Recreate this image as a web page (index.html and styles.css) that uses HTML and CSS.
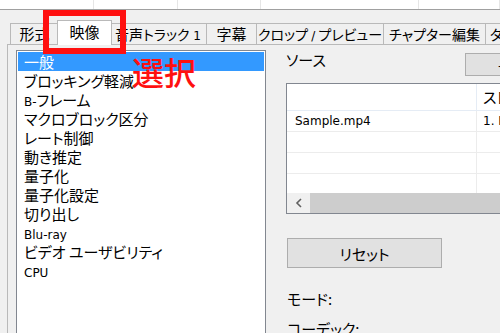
FILE: index.html
```html
<!DOCTYPE html>
<html lang="ja">
<head>
    <meta charset="UTF-8">
    <meta name="viewport" content="width=device-width, initial-scale=1.0">
    <title>映像設定</title>
    <link rel="stylesheet" href="styles.css">
</head>
<body>
    <div class="strip">
        <span class="cell c1"></span>
        <span class="cell c2"></span>
        <span class="cell c3"></span>
        <span class="cell c4"></span>
        <span class="cell"></span>
    </div>

    <div class="tabctl">
        <div class="tabs">
            <div class="tab t-format">形式</div>
            <div class="tab t-video selected">映像</div>
            <div class="tab t-audio">音声トラック<span class="lat"> 1</span></div>
            <div class="tab t-sub">字幕</div>
            <div class="tab t-crop">クロップ <span class="lat">/</span> プレビュー</div>
            <div class="tab t-chapter">チャプター編集</div>
            <div class="tab t-more">タグ</div>
        </div>

        <div class="panel">
            <ul class="listbox">
                <li class="active">一般</li>
                <li>ブロッキング軽減</li>
                <li><span class="lat">B-</span>フレーム</li>
                <li>マクロブロック区分</li>
                <li>レート制御</li>
                <li>動き推定</li>
                <li>量子化</li>
                <li>量子化設定</li>
                <li>切り出し</li>
                <li><span class="lat">Blu-ray</span></li>
                <li>ビデオ ユーザビリティ</li>
                <li><span class="lat">CPU</span></li>
            </ul>

            <div class="side">
                <div class="source-row">
                    <span class="source-label">ソース</span>
                    <button class="btn small">-</button>
                </div>

                <div class="listview">
                    <div class="lv-head">
                        <div class="lv-col first"></div>
                        <div class="lv-col">ストリーム</div>
                    </div>
                    <div class="lv-body">
                        <div class="lv-row">
                            <div class="lv-col first lat-cell">Sample.mp4</div>
                            <div class="lv-col lat-cell">1. H264</div>
                        </div>
                        <div class="lv-row"><div class="lv-col first"></div><div class="lv-col"></div></div>
                        <div class="lv-row"><div class="lv-col first"></div><div class="lv-col"></div></div>
                        <div class="lv-row"><div class="lv-col first"></div><div class="lv-col"></div></div>
                    </div>
                    <div class="hscroll">
                        <div class="arrow">
                            <svg width="8" height="10" viewBox="0 0 8 10">
                                <polyline points="6,1 2,5 6,9" fill="none" stroke="#606060" stroke-width="1.6"/>
                            </svg>
                        </div>
                        <div class="thumb"></div>
                    </div>
                </div>

                <button class="btn reset">リセット</button>

                <div class="field">モード:</div>
                <div class="field next">コーデック:</div>
            </div>
        </div>
    </div>

    <!-- annotation overlay -->
    <div class="mark"></div>
    <div class="mark-label">選択</div>
</body>
</html>
```

FILE: styles.css
```css
body {
    margin: 0;
    width: 500px;
    height: 333px;
    overflow: hidden;
    background-color: #f0f0f0;
    font-family: "Noto Sans CJK JP", sans-serif;
    font-size: 15px;
    font-feature-settings: "palt";
    color: #000;
    position: relative;
}

.lat {
    font-family: "DejaVu Sans", sans-serif;
    font-size: 12px;
}

/* white strip of the window above */
.strip {
    display: flex;
    height: 9px;
    background-color: #fff;
    border-bottom: 1px solid #a0a0a0;
}

.cell {
    flex: 1;
    border-right: 1px solid #e6e6e6;
}

.cell.c1 { flex: none; width: 93px; }
.cell.c2 { flex: none; width: 83px; }
.cell.c3 { flex: none; width: 82px; }
.cell.c4 { flex: none; width: 157px; }

.tabctl {
    margin-left: 7px;
    margin-top: 10px;
}

.tabs {
    display: flex;
    align-items: flex-end;
    height: 24px;
    padding-left: 3px;
}

.tab {
    flex: none;
    box-sizing: border-box;
    height: 21px;
    line-height: 20px;
    font-size: 14px;
    text-align: center;
    white-space: nowrap;
    overflow: hidden;
    background-color: #f0f0f0;
    border: 1px solid #b9b9b9;
    border-bottom: none;
    border-left: none;
}

.tab:first-child {
    border-left: 1px solid #b9b9b9;
}

.tab.selected {
    height: 25px;
    padding-top: 1px;
    margin: 0 -2px -1px -2px;
    border-left: 1px solid #b9b9b9;
    background-color: #fff;
    font-size: 15px;
    position: relative;
    z-index: 1;
}

.t-format { width: 49px; font-size: 15px; }
.t-video { width: 55px; }
.t-audio { width: 97px; }
.t-sub { width: 50px; font-size: 15px; }
.t-crop { width: 127px; }
.t-chapter { width: 102px; }
.t-more { width: 74px; text-align: left; padding-left: 4px; }

.t-audio .lat,
.t-crop .lat {
    font-size: 12px;
}

.panel {
    display: flex;
    align-items: flex-start;
    height: 300px;
    border-top: 1px solid #b9b9b9;
    border-left: 1px solid #b9b9b9;
}

.listbox {
    flex: none;
    list-style: none;
    box-sizing: border-box;
    width: 250px;
    height: 290px;
    margin: 5px 0 0 8px;
    padding: 1px;
    background-color: #fff;
    border: 1px solid #828790;
}

.listbox li {
    height: 19px;
    line-height: 19px;
    padding-left: 6px;
    white-space: nowrap;
}

.listbox li.active {
    background-color: #3399ff;
    color: #fff;
}

.side {
    flex: none;
    width: 300px;
    margin: 8px 0 0 20px;
}

.source-row {
    display: flex;
    align-items: flex-start;
    height: 23px;
}

.source-label {
    flex: none;
    width: 179px;
    line-height: 16px;
    margin-top: -1px;
}

.btn {
    font-family: "Noto Sans CJK JP", sans-serif;
    font-size: 15px;
    font-feature-settings: "palt";
    box-sizing: border-box;
    background-color: #e1e1e1;
    border: 1px solid #adadad;
    border-radius: 0;
    padding: 0;
    color: #000;
}

.btn.small {
    flex: none;
    width: 100px;
    height: 23px;
    text-align: left;
    padding-left: 32px;
    line-height: 20px;
}

.listview {
    box-sizing: border-box;
    display: flex;
    flex-direction: column;
    width: 280px;
    height: 131px;
    margin-top: 7px;
    background-color: #fff;
    border: 1px solid #828790;
}

.lv-head {
    flex: none;
    display: flex;
    height: 27px;
    box-sizing: border-box;
    border-bottom: 1px solid #e5ecf5;
    line-height: 26px;
}

.lv-head .lv-col.first {
    border-right: 1px solid #e5ecf5;
}

.lv-body {
    flex: 1;
    overflow: hidden;
}

.lv-row {
    display: flex;
    height: 21px;
    box-sizing: border-box;
    border-bottom: 1px solid #ececec;
    line-height: 20px;
}

.lv-col {
    padding-left: 6px;
    white-space: nowrap;
}

.lv-col.first {
    flex: none;
    box-sizing: border-box;
    width: 190px;
    padding-left: 8px;
    border-right: 1px solid #ececec;
}

.lat-cell {
    font-family: "DejaVu Sans", sans-serif;
    font-size: 12px;
}

.hscroll {
    flex: none;
    display: flex;
    height: 20px;
    background-color: #f0f0f0;
}

.arrow {
    width: 23px;
    display: flex;
    align-items: center;
    justify-content: center;
}

.thumb {
    flex: 1;
    background-color: #cdcdcd;
}

.btn.reset {
    display: block;
    width: 155px;
    height: 30px;
    margin-top: 24px;
    margin-left: 1px;
}

.field {
    line-height: 19px;
    margin-top: 21px;
    margin-left: 1px;
}

.field.next {
    margin-top: 11px;
}

/* red annotation */
.mark {
    position: absolute;
    left: 43px;
    top: 10px;
    width: 83px;
    height: 44px;
    box-sizing: border-box;
    border: 6px solid #ff1010;
    z-index: 5;
}

.mark-label {
    position: absolute;
    left: 132px;
    top: 55px;
    font-size: 32px;
    line-height: 1;
    font-weight: 500;
    color: #ff1010;
    z-index: 5;
}
```
